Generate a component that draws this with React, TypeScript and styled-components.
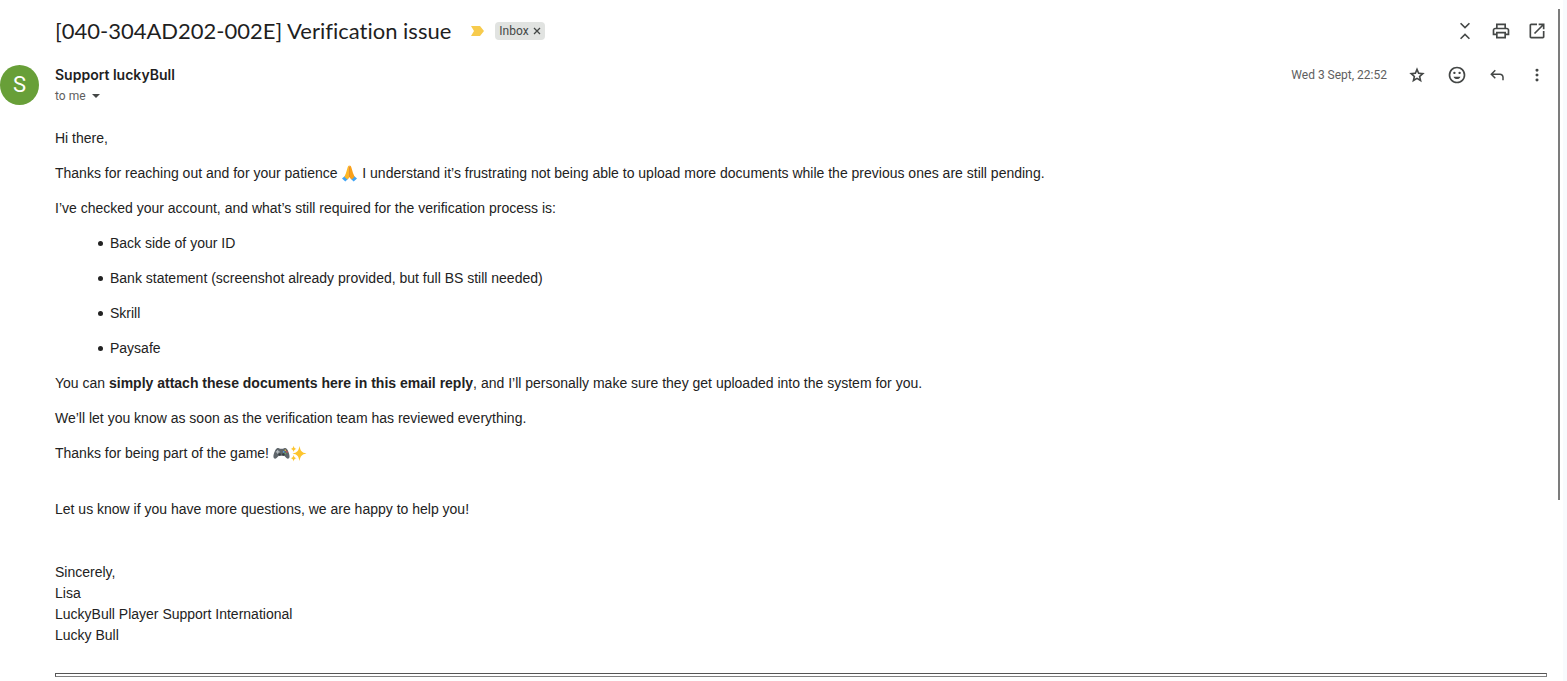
import React from 'react';
import styled, { createGlobalStyle } from 'styled-components';

const Global = createGlobalStyle`
  * { box-sizing: border-box; }
  body { margin: 0; background: #fff; color: #1f1f1f; }
  button { border: 0; padding: 0; background: none; color: inherit; font: inherit; cursor: pointer; }
`;

const Page = styled.div`
  display: flex;
  height: 100vh;
  overflow: hidden;
`;

const Message = styled.main`
  flex: 1;
  min-width: 0;
  padding: 10px 11px 0 0;
`;

const ScrollTrack = styled.div`
  display: flex;
  flex-direction: column;
  width: 5px;
  padding-top: 9px;
`;

const ScrollThumb = styled.div`
  width: 2px;
  height: 73%;
  background: #7c7c7c;
`;

const PageEdge = styled.div`
  width: 4px;
  background: #f8fafd;
`;

const TitleBar = styled.header`
  display: flex;
  align-items: center;
  height: 42px;
  padding-left: 55px;
`;

const Title = styled.h1`
  margin: 0;
  font: 400 22px/28px 'Google Sans', Lato, Roboto, sans-serif;
  font-variant-ligatures: none;
`;

const Marker = styled.svg`
  width: 13px;
  height: 10px;
  margin: 0 11px 0 20px;
`;

const Label = styled.span`
  display: flex;
  align-items: center;
  gap: 4px;
  height: 18px;
  padding: 0 4px;
  border-radius: 4px;
  background: #e1e3e1;
  color: #444746;
  font: 12px/18px Roboto, sans-serif;
`;

const LabelRemove = styled.button`
  display: flex;
  svg { width: 8px; height: 8px; }
`;

const Actions = styled.div<{ $gap: number }>`
  display: flex;
  align-items: center;
  gap: ${(p) => p.$gap}px;
  margin-left: auto;
  color: #444746;
`;

const IconButton = styled.button`
  display: flex;
  align-items: center;
  justify-content: center;
  width: 20px;
  height: 20px;
`;

const Sender = styled.section`
  display: flex;
  gap: 16px;
  padding-top: 13px;
`;

const Avatar = styled.div`
  display: flex;
  align-items: center;
  justify-content: center;
  width: 39px;
  height: 40px;
  border-radius: 50%;
  background: #689f38;
  color: #fff;
  font: 400 22px/40px Roboto, sans-serif;
`;

const SenderText = styled.div`
  font-family: Roboto, sans-serif;
`;

const SenderName = styled.h2`
  margin: 0;
  font: 600 14px/20px Inter, Roboto, sans-serif;
`;

const Recipient = styled.button`
  display: flex;
  align-items: center;
  gap: 6px;
  color: #5e5e5e;
  font: 12px/22px Roboto, sans-serif;
  svg { width: 8px; height: 4px; }
`;

const SentTime = styled.time`
  color: #5e5e5e;
  font: 12px/22px Roboto, sans-serif;
`;

const SenderActions = styled(Actions)`
  height: 20px;
`;

const Body = styled.article`
  padding: 21px 0 0 55px;
  font: 14px/21px Arial, 'Liberation Sans', sans-serif;
  color: #222;
  p { margin: 0 0 14px; }
`;

const Documents = styled.ul`
  margin: 0;
  padding-left: 43px;
  list-style: none;
  li {
    display: flex;
    align-items: center;
    gap: 7px;
    margin-bottom: 14px;
  }
  li::before {
    content: '';
    width: 5px;
    height: 5px;
    border-radius: 50%;
    background: #222;
  }
`;

const Closing = styled.p`
  && { margin: 35px 0 42px; }
`;

const Signature = styled.address`
  font-style: normal;
`;

const Divider = styled.hr`
  height: 4px;
  margin: 27px 0 0;
  border: 1px solid #808080;
  border-top-color: #555;
  border-left-color: #555;
`;

const Emoji = styled.svg`
  width: 17px;
  height: 17px;
  vertical-align: -4px;
`;

type IconProps = { d: string; size?: number };
const Icon = ({ d, size = 20 }: IconProps) => (
  <svg width={size} height={size} viewBox="0 -960 960 960" fill="currentColor" aria-hidden="true">
    <path d={d} />
  </svg>
);

const icons = {
  collapse: 'm296-80-56-56 240-240 240 240-56 56-184-184L296-80Zm184-504L240-824l56-56 184 184 184-184 56 56-240 240Z',
  print: 'M640-640v-120H320v120h-80v-200h480v200h-80ZM640-200v-160H320v160h320Zm80 80H240v-160H80v-240q0-51 35-85.500t85-34.500h560q51 0 85.500 34.500T880-520v240H720v160Zm80-240v-160q0-17-11.500-28.500T760-560H200q-17 0-28.500 11.500T160-520v160h80v-80h480v80h80Z',
  open: 'M200-120q-33 0-56.500-23.500T120-200v-560q0-33 23.500-56.500T200-840h280v80H200v560h560v-280h80v280q0 33-23.500 56.500T760-120H200Zm188-212-56-56 372-372H560v-80h280v280h-80v-144L388-332Z',
  star: 'm354-277 126-76 126 77-33-144 111-96-146-13-58-136-58 135-146 13 111 97-33 143ZM226-100l67-290L68-592l297-26 115-274 115 274 297 26-225 202 67 290-254-154-254 154Z',
  smile: 'M605-525q25 0 40-15.500T660-580q0-24-15-39.500T605-635q-25 0-40 15.500T550-580q0 24 15 39.500t40 15.500Zm-250 0q25 0 40-15.500T410-580q0-24-15-39.500T355-635q-25 0-40 15.500T300-580q0 24 15 39.500t40 15.500Zm125 240q58 0 103-31t65-84H312q20 53 65 84t103 31Zm0 205q-83 0-156-31.500T197-197q-54-54-85.500-127T80-480q0-83 31.500-156T197-763q54-54 127-85.500T480-880q83 0 156 31.500T763-763q54 54 85.500 127T880-480q0 83-31.500 156T763-197q-54 54-127 85.500T480-80Zm0-80q134 0 227-93t93-227q0-134-93-227t-227-93q-134 0-227 93t-93 227q0 134 93 227t227 93Z',
  reply: 'M760-200v-160q0-50-35-85t-85-35H273l144 144-57 56-240-240 240-240 57 56-144 144h367q83 0 141.500 58.500T840-360v160h-80Z',
  more: 'M480-140q-33 0-56.500-23.500T400-220q0-33 23.500-56.500T480-300q33 0 56.500 23.500T560-220q0 33-23.500 56.500T480-140Zm0-260q-33 0-56.500-23.500T400-480q0-33 23.500-56.500T480-560q33 0 56.500 23.500T560-480q0 33-23.500 56.500T480-400Zm0-260q-33 0-56.500-23.500T400-740q0-33 23.500-56.500T480-820q33 0 56.500 23.500T560-740q0 33-23.500 56.500T480-660Z',
};

const FoldedHands = () => (
  <Emoji viewBox="0 0 17 16" role="img" aria-label="Folded hands">
    <path d="M1 13 4.500 10l3 3-3.200 3Z" fill="#42a5f5" />
    <path d="M16 13 12.500 10l-3 3 3.200 3Z" fill="#42a5f5" />
    <path d="M8.400 0C7.400 0 7 .7 6.600 2L5 7.500 3.400 11.300l2.900 2.700 2.100-2Z" fill="#ffb727" />
    <path d="M8.600 0c1 0 1.400.7 1.800 2L12 7.500l1.600 3.800-2.900 2.700-2.100-2Z" fill="#f9a11b" />
    <path d="M8.500 1v10.500" stroke="#d9822b" strokeWidth=".8" />
  </Emoji>
);

const Gamepad = () => (
  <Emoji viewBox="0 0 17 16" role="img" aria-label="Video game">
    <path d="M3.700 3c1-.7 2.500-.6 3.200.3h3.200c.7-.9 2.200-1 3.200-.3 1.800 1.200 3.500 6.300 3.200 8.600-.2 1.600-1.800 2.100-3.100.9L11.200 10.200H5.800l-2.200 2.300c-1.300 1.200-2.900.7-3.100-.9C.2 9.300 1.900 4.200 3.700 3Z" fill="#5f666b" />
    <path d="M4.700 4.600v3.600M2.900 6.400h3.600" stroke="#b8bec2" strokeWidth="1.100" />
    <circle cx="12.300" cy="4.800" r=".8" fill="#f4c542" />
    <circle cx="13.900" cy="6.400" r=".8" fill="#e8504f" />
    <circle cx="10.700" cy="6.400" r=".8" fill="#56a8e8" />
    <circle cx="12.300" cy="8" r=".8" fill="#62b55c" />
    <circle cx="6.600" cy="9" r="1.200" fill="#353b3f" />
    <circle cx="10.400" cy="9" r="1.200" fill="#353b3f" />
  </Emoji>
);

const Sparkles = () => (
  <Emoji viewBox="0 0 17 16" role="img" aria-label="Sparkles">
    <g fill="#fdc52e">
      <path d="M9.500 .5c1.100 5.200 2.200 6.500 7 7.500-4.800 1-5.900 2.300-7 7.500-1.100-5.200-2.200-6.500-7-7.500 4.800-1 5.900-2.300 7-7.500" />
      <path d="M3.600.2c.5 2.200 1 2.800 3 3.200-2 .4-2.500 1-3 3.200-.5-2.200-1-2.800-3-3.200 2-.4 2.500-1 3-3.200" />
      <path d="M3.600 9.600c.5 2.200 1 2.800 3 3.200-2 .4-2.500 1-3 3.200-.5-2.200-1-2.800-3-3.200 2-.4 2.500-1 3-3.200" />
    </g>
  </Emoji>
);

export default function App() {
  return (
    <>
      <Global />
      <Page>
        <Message>
          <TitleBar>
            <Title>[040-304AD202-002E] Verification issue</Title>
            <Marker viewBox="0 0 13 10" aria-hidden="true">
              <path d="M0 0h9l4 5-4 5H0l3-5Z" fill="#f7cb4d" />
            </Marker>
            <Label>
              Inbox
              <LabelRemove aria-label="Remove label Inbox">
                <svg viewBox="0 0 8 8" stroke="currentColor" strokeWidth="1.300" aria-hidden="true">
                  <path d="m1 1 6 6M7 1 1 7" />
                </svg>
              </LabelRemove>
            </Label>
            <Actions $gap={16}>
              <IconButton aria-label="Collapse all"><Icon d={icons.collapse} /></IconButton>
              <IconButton aria-label="Print all"><Icon d={icons.print} /></IconButton>
              <IconButton aria-label="Open in new window"><Icon d={icons.open} /></IconButton>
            </Actions>
          </TitleBar>
          <Sender>
            <Avatar>S</Avatar>
            <SenderText>
              <SenderName>Support luckyBull</SenderName>
              <Recipient aria-label="Show details">
                to me
                <svg viewBox="0 0 8 4" fill="#444746" aria-hidden="true"><path d="M0 0h8L4 4Z" /></svg>
              </Recipient>
            </SenderText>
            <SenderActions $gap={20}>
              <SentTime>Wed 3 Sept, 22:52</SentTime>
              <IconButton aria-label="Star"><Icon d={icons.star} size={18} /></IconButton>
              <IconButton aria-label="Add reaction"><Icon d={icons.smile} /></IconButton>
              <IconButton aria-label="Reply"><Icon d={icons.reply} size={18} /></IconButton>
              <IconButton aria-label="More"><Icon d={icons.more} size={18} /></IconButton>
            </SenderActions>
          </Sender>
          <Body>
            <p>Hi there,</p>
            <p>
              Thanks for reaching out and for your patience <FoldedHands /> I understand it’s frustrating not being
              able to upload more documents while the previous ones are still pending.
            </p>
            <p>I’ve checked your account, and what’s still required for the verification process is:</p>
            <Documents>
              <li>Back side of your ID</li>
              <li>Bank statement (screenshot already provided, but full BS still needed)</li>
              <li>Skrill</li>
              <li>Paysafe</li>
            </Documents>
            <p>
              You can <strong>simply attach these documents here in this email reply</strong>, and I’ll personally
              make sure they get uploaded into the system for you.
            </p>
            <p>We’ll let you know as soon as the verification team has reviewed everything.</p>
            <p>Thanks for being part of the game! <Gamepad /><Sparkles /></p>
            <Closing>Let us know if you have more questions, we are happy to help you!</Closing>
            <Signature>
              Sincerely,<br />
              Lisa<br />
              LuckyBull Player Support International<br />
              Lucky Bull
            </Signature>
            <Divider />
          </Body>
        </Message>
        <ScrollTrack><ScrollThumb /></ScrollTrack>
        <PageEdge />
      </Page>
    </>
  );
}
